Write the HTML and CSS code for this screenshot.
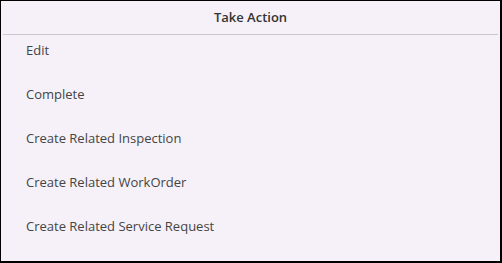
FILE: index.html
```html
<!DOCTYPE html>
<html lang="en">
<head>
  <meta charset="UTF-8">
  <title>Take Action</title>
  <link rel="stylesheet" href="styles.css">
</head>
<body>

<div class="sheet">
  <div class="sheet-title">Take Action</div>
  <ul class="actions">
    <li>Edit</li>
    <li>Complete</li>
    <li>Create Related Inspection</li>
    <li>Create Related WorkOrder</li>
    <li>Create Related Service Request</li>
  </ul>
</div>

</body>
</html>
```

FILE: styles.css
```css
html, body {
  margin: 0;
  height: 100%;
}
body {
  font-family: "Open Sans", sans-serif;
  font-size: 13px;
  background: #000;
}
.sheet {
  box-sizing: border-box;
  height: 100%;
  margin: 1px 2px 2px 1px;
  background: #f6f1f8;
  height: calc(100% - 3px);
}
.sheet-title {
  height: 33px;
  line-height: 33px;
  text-align: center;
  font-weight: 600;
  color: #333;
  margin: 0 2px;
  border-bottom: 1px solid #c9c7cf;
}
.actions {
  list-style: none;
  margin: 0;
  padding: 6px 0 0 25px;
  display: flex;
  flex-direction: column;
  gap: 26px;
  color: #444;
}
.actions li {
  line-height: 18px;
}
```
